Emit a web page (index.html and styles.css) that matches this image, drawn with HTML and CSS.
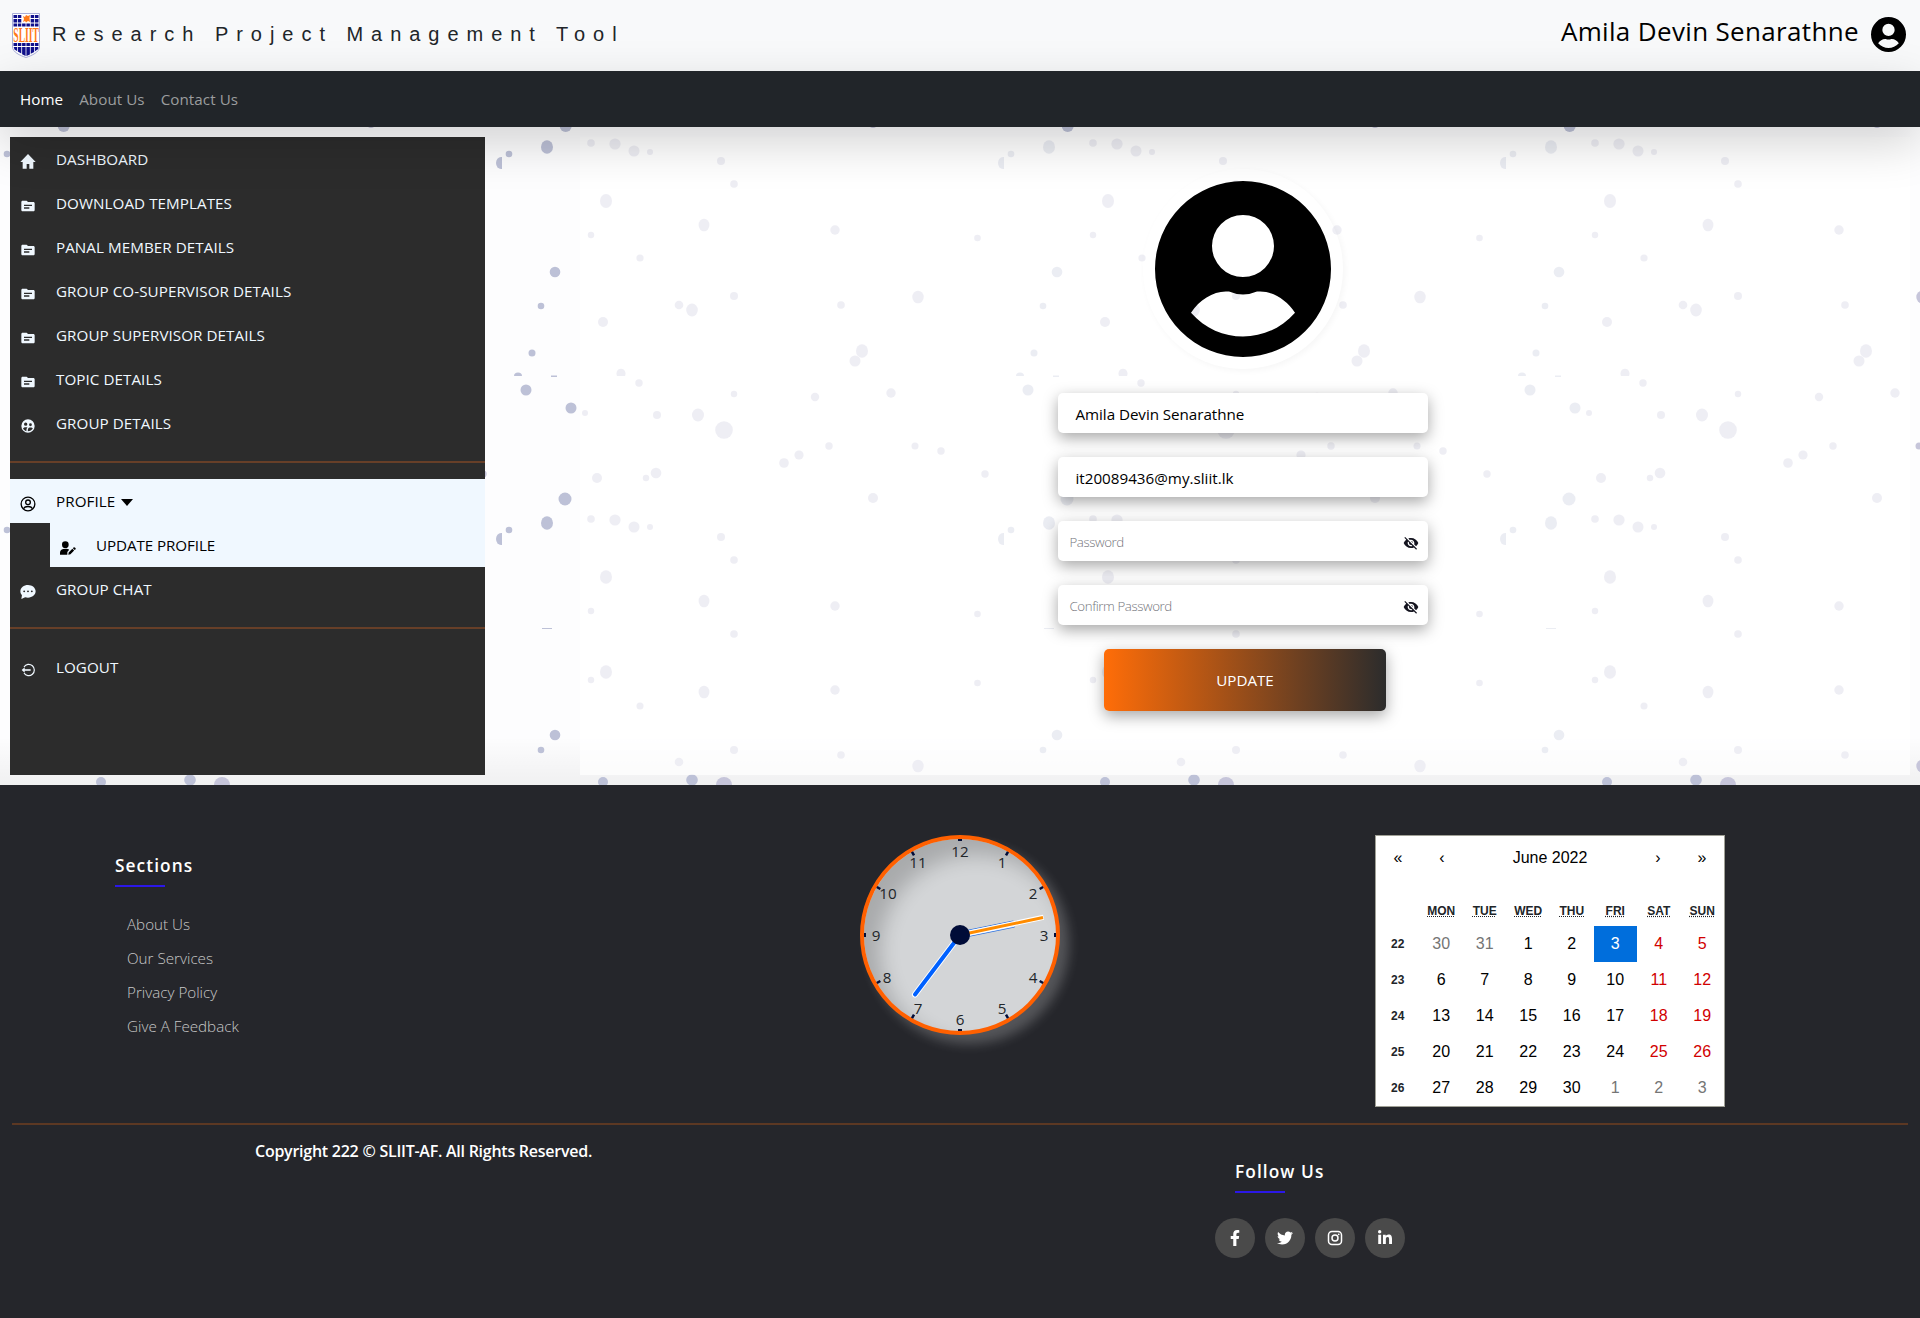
FILE: index.html
```html
<!DOCTYPE html>
<html lang="en">
<head>
<meta charset="utf-8">
<title>Research Project Management Tool</title>
<link rel="stylesheet" href="styles.css">
</head>
<body>
<svg class="defs" width="0" height="0" aria-hidden="true">
  <symbol id="avatar" viewBox="-88 -88 176 176"><path fill-rule="evenodd" d="M0-88A88 88 0 1 1 0 88A88 88 0 1 1 0-88ZM0-54A31 31 0 1 0 0 8A31 31 0 1 0 0-54ZM-52 43.7C-43 30-28 21-14 22.6Q0 28.6 14 22.6C28 21 43 30 52 43.7C24 75.5-24 75.5-52 43.7Z"/></symbol>
  <symbol id="folder" viewBox="0 0 24 24"><path d="M20 6h-8l-2-2H4c-1.1 0-2 .9-2 2v12c0 1.100.9 2 2 2h16c1.100 0 2-.9 2-2V8c0-1.100-.9-2-2-2zm-6 10H6v-2h8v2zm4-4H6v-2h12v2z"/></symbol>
  <symbol id="eye-off" viewBox="0 0 24 24"><path d="M12 7c2.760 0 5 2.240 5 5 0 .65-.13 1.260-.36 1.830l2.920 2.920c1.510-1.260 2.700-2.890 3.430-4.750-1.730-4.390-6-7.500-11-7.500-1.400 0-2.740.25-3.980.7l2.160 2.160C10.740 7.130 11.350 7 12 7zM2 4.270l2.280 2.280.46.46C3.080 8.300 1.780 10.020 1 12c1.730 4.390 6 7.500 11 7.500 1.550 0 3.030-.3 4.380-.84l.42.42L19.730 22 21 20.730 3.270 3 2 4.270zM7.530 9.800l1.550 1.550c-.05.21-.08.43-.08.65 0 1.660 1.340 3 3 3 .22 0 .44-.03.65-.08l1.550 1.550c-.67.33-1.410.53-2.200.53-2.760 0-5-2.240-5-5 0-.79.2-1.530.53-2.200zm4.310-.78l3.150 3.150.02-.16c0-1.660-1.340-3-3-3l-.17.01z"/></symbol>
</svg>

<header class="header">
  <div class="brand">
    <svg class="logo" width="28" height="45" viewBox="0 0 28 45">
      <path d="M.5.5h27V34C27.500 39 20 42.500 14 44.500C8 42.500.5 39 .5 34Z" fill="#fff" stroke="#a9aed8"/>
      <g fill="#10108c">
        <path d="M1.500 2h3.500v3h-3.500zM5.800 2h3.500v3h-3.500zM18.700 2h3.500v3h-3.500zM23 2h3.500v3h-3.500zM1.500 6h3.500v3.500h-3.500zM5.800 6h3.500v3.500h-3.500zM18.700 6h3.500v3.500h-3.500zM23 6h3.500v3.500h-3.500zM1.500 10.500h3.500v3h-3.500zM5.800 10.500h3.500v3h-3.500zM10.100 10.500h3.500v3h-3.500zM14.400 10.500h3.500v3h-3.500zM18.700 10.500h3.500v3h-3.500zM23 10.500h3.500v3h-3.500z"/>
        <path d="M1.500 30h3.500v3h-3.500zM5.800 30h3.500v3h-3.500zM10.100 30h3.500v3h-3.500zM14.400 30h3.500v3h-3.500zM18.700 30h3.500v3h-3.500zM23 30h3.500v3h-3.500zM1.700 34h3.300v4L2.500 36.500zM5.800 34h3.500v6.500l-3.500-2zM10.100 34h3.500v9l-3.500-1.700zM14.400 34h3.500v7.500l-3.500 1.500zM18.700 34h3.500v5L18.700 40.700zM23 34h3.300v2l-3.300 2.300z"/>
      </g>
      <path d="M11 3l2 1 1-2 2 1 2-1-.5 3 .5 4-2-1-2 1.500-1-1.500-2 1 1-3z" fill="#ff7a1a"/>
      <text transform="translate(1.300 28.700) scale(.47 1)" class="logo-text">SLIIT</text>
    </svg>
    <span class="brand-name">Research Project Management Tool</span>
  </div>
  <div class="user"><span class="user-name">Amila Devin Senarathne</span><svg width="35" height="35"><use href="#avatar"/></svg></div>
</header>

<nav class="navbar">
  <a class="nav-home">Home</a><a class="nav-about">About Us</a><a class="nav-contact">Contact Us</a>
</nav>

<main class="main">
  <svg class="dots" width="1920" height="658" viewBox="0 127 1920 658" aria-hidden="true">
    <defs>
      <pattern id="drops" x="502" y="0" width="502" height="1000" patternUnits="userSpaceOnUse">
        <g transform="translate(-502 0)">
          <g fill="#bdc1d7">
            <circle cx="565.700" cy="126" r="6"/><ellipse cx="547" cy="147" rx="6" ry="6.800"/><circle cx="509" cy="154" r="3.300"/><ellipse cx="1003" cy="163" rx="5" ry="6"/>
            <circle cx="555" cy="272" r="5.300"/><circle cx="541" cy="306" r="3.300"/><circle cx="532" cy="353" r="3.500"/><path d="M514 376a4 3.500 0 0 1 8 0z"/>
            <circle cx="526" cy="390" r="5.500"/><circle cx="571" cy="408" r="5.500"/><circle cx="565" cy="499" r="6.500"/><ellipse cx="547" cy="523" rx="6" ry="6.800"/>
            <circle cx="509" cy="530" r="3.300"/><ellipse cx="1003" cy="539" rx="5" ry="6"/><circle cx="555" cy="735" r="5.300"/><circle cx="541" cy="750" r="3.300"/>
            <circle cx="603" cy="782" r="5"/><circle cx="692" cy="780" r="5.800"/><path d="M551 375.500h6v1.500h-6zM542 628h10v1h-10z"/>
          </g>
          <g fill="#c6c5da">
            <circle cx="591" cy="143" r="3.800"/><circle cx="615" cy="144" r="5.600"/><circle cx="634" cy="151" r="5.500"/><circle cx="650" cy="152" r="3"/><circle cx="721" cy="161" r="4"/><circle cx="734" cy="184" r="3.800"/>
            <ellipse cx="606" cy="201" rx="6" ry="7"/><circle cx="591" cy="235" r="3.200"/><circle cx="640" cy="258" r="3.600"/><ellipse cx="704" cy="225" rx="5.400" ry="6.300"/><circle cx="835" cy="230" r="4.700"/><circle cx="977.500" cy="238" r="3.300"/>
            <circle cx="603" cy="322" r="5"/><circle cx="679" cy="305" r="4.300"/><ellipse cx="692" cy="310" rx="5.800" ry="6.500"/><circle cx="734" cy="296" r="4"/><circle cx="841" cy="305" r="3.800"/><ellipse cx="918" cy="297" rx="5.700" ry="6.300"/>
            <path d="M617 376a4.500 5 0 1 1 8 0z"/><circle cx="639" cy="383" r="3.700"/><ellipse cx="862" cy="351" rx="6" ry="6.800"/><circle cx="855" cy="361" r="5.500"/><circle cx="585" cy="413" r="3"/><circle cx="657" cy="415" r="4"/><ellipse cx="698" cy="415" rx="6" ry="6.500"/>
            <circle cx="724" cy="430" r="8.800"/><circle cx="734" cy="394" r="3.200"/><circle cx="815" cy="397" r="4.200"/><circle cx="891" cy="393" r="4.700"/><circle cx="799" cy="455" r="4.600"/><circle cx="829" cy="446" r="3.700"/><circle cx="915" cy="446" r="3.500"/><circle cx="941" cy="451" r="3.700"/><circle cx="784" cy="463" r="4.800"/><circle cx="873" cy="124" r="4"/>
            <circle cx="985" cy="474" r="3.700"/><circle cx="597" cy="478" r="5"/><circle cx="646" cy="478" r="3.200"/><circle cx="656" cy="473" r="5.300"/><circle cx="591" cy="519" r="3.800"/><circle cx="615" cy="520" r="5.600"/><circle cx="634" cy="527" r="5.500"/><circle cx="650" cy="527" r="3"/><circle cx="721" cy="537" r="4"/><circle cx="734" cy="560" r="3.800"/><circle cx="873" cy="498" r="5"/>
            <ellipse cx="606" cy="577" rx="6" ry="6.800"/><circle cx="591" cy="611" r="3.200"/><ellipse cx="704" cy="601" rx="5.400" ry="6.300"/><circle cx="835" cy="606" r="4.700"/><circle cx="977.500" cy="614" r="3.300"/><circle cx="734" cy="634" r="3.800"/>
            <ellipse cx="606" cy="672" rx="6" ry="6.800"/><circle cx="591" cy="680" r="3.200"/><circle cx="640" cy="706" r="3.500"/><ellipse cx="704" cy="692" rx="5.400" ry="6.300"/><circle cx="835" cy="690" r="4.700"/><circle cx="977.500" cy="683" r="3.300"/>
            <circle cx="679" cy="762" r="4.300"/><circle cx="734" cy="750" r="4"/><circle cx="841" cy="755" r="3.800"/><ellipse cx="918" cy="766" rx="5.700" ry="6.300"/><circle cx="724" cy="785" r="8"/>
          </g>
        </g>
      </pattern>
    </defs>
    <rect y="127" width="1920" height="658" fill="url(#drops)"/>
  </svg>

  <aside class="sidebar">
    <a class="item"><svg class="icon" viewBox="0 0 24 24"><path d="M10 22v-7h4v7h6V12h3.500L12 0 .5 12H4v10z"/></svg><span>DASHBOARD</span></a>
    <a class="item"><svg class="icon"><use href="#folder"/></svg><span>DOWNLOAD TEMPLATES</span></a>
    <a class="item"><svg class="icon"><use href="#folder"/></svg><span>PANAL MEMBER DETAILS</span></a>
    <a class="item"><svg class="icon"><use href="#folder"/></svg><span>GROUP CO-SUPERVISOR DETAILS</span></a>
    <a class="item"><svg class="icon"><use href="#folder"/></svg><span>GROUP SUPERVISOR DETAILS</span></a>
    <a class="item"><svg class="icon"><use href="#folder"/></svg><span>TOPIC DETAILS</span></a>
    <a class="item"><svg class="icon" viewBox="0 0 24 24"><path fill-rule="evenodd" d="M12 2a10 10 0 1 0 0 20 10 10 0 0 0 0-20zM8.500 6.800a2.500 2.500 0 1 1 0 5 2.500 2.500 0 0 1 0-5zM15.700 8a2.100 2.100 0 1 1 0 4.200 2.100 2.100 0 0 1 0-4.200zM4.500 15.500c1-1.700 4.500-2.300 6.800-1.300-1.300 1-1.700 2.300-1.700 5.500-2.300-.5-4.300-2.200-5.100-4.200zm7.300 4.400c0-3 0-5.500 3.900-5.500 1.800 0 3 .5 3.500 1.500-1.400 2.500-4.200 4-7.400 4z"/></svg><span>GROUP DETAILS</span></a>
    <hr>
    <a class="item active"><svg class="icon" viewBox="0 0 24 24" fill="none" stroke="#000" stroke-width="2"><circle cx="12" cy="12" r="10.300"/><circle cx="12" cy="9.500" r="3.500"/><path d="M5.500 19.500c1-5 12-5 13 0"/></svg><span>PROFILE</span><i class="caret"></i></a>
    <a class="item active sub"><svg class="icon wide" viewBox="0 0 24 20"><circle cx="8" cy="5" r="5"/><path d="M0 20v-3c0-4 3-6 8-6 2.500 0 4.500.5 5.800 1.600L11 16v4zM12.500 20l.5-3.200 5.500-5.600 2.700 2.700-5.500 5.600zM19.300 10.400l1.400-1.400c1-1 3.700 1.600 2.700 2.700L22 13z"/></svg><span>UPDATE PROFILE</span></a>
    <a class="item"><svg class="icon wide" viewBox="0 0 24 22"><path fill-rule="evenodd" d="M12 0C5.500 0 0 4.300 0 10c0 2.500 1 4.500 2.500 6.300L1.500 22l6-2.700c1.500.5 3 .7 4.500.7 6.600 0 12-4.500 12-10S18.600 0 12 0zM6 8.500a1.500 1.500 0 1 1 0 3 1.500 1.500 0 0 1 0-3zm6 0a1.500 1.500 0 1 1 0 3 1.500 1.500 0 0 1 0-3zm6 0a1.500 1.500 0 1 1 0 3 1.500 1.500 0 0 1 0-3z"/></svg><span>GROUP CHAT</span></a>
    <hr>
    <a class="item"><svg class="icon" viewBox="0 0 24 24" fill="none" stroke="#f0f8ff" stroke-width="1.800"><path d="M6 7.500a8.400 8.400 0 1 1 0 9"/><path d="M16 12H5" stroke-width="2.400"/><path d="M7 7.800v8.400L2.500 12z" fill="#f0f8ff" stroke="none"/></svg><span>LOGOUT</span></a>
  </aside>

  <section class="panel">
    <form class="form">
      <div class="photo"><svg width="176" height="176"><use href="#avatar"/></svg></div>
      <div class="field"><span class="value name">Amila Devin Senarathne</span></div>
      <div class="field"><span class="value mail">it20089436@my.sliit.lk</span></div>
      <div class="field pass"><span>Password</span><svg width="16" height="16"><use href="#eye-off"/></svg></div>
      <div class="field pass"><span>Confirm Password</span><svg width="16" height="16"><use href="#eye-off"/></svg></div>
      <div class="update">UPDATE</div>
    </form>
  </section>
</main>

<footer class="footer">
  <div class="top">
    <div class="sections">
      <h4>Sections</h4>
      <ul><li>About Us</li><li>Our Services</li><li>Privacy Policy</li><li>Give A Feedback</li></ul>
    </div>
    <div class="clock">
      <svg width="200" height="200" viewBox="0 0 200 200">
        <g stroke="#000c38" stroke-width="4">
          <path d="M100 4v2M100 194v2M4 100h2M194 100h2"/>
          <path d="M100 4v4M100 192v4M4 100h4M192 100h4" stroke-width="2.500" transform="rotate(30 100 100)"/>
          <path d="M100 4v4M100 192v4M4 100h4M192 100h4" stroke-width="2.500" transform="rotate(60 100 100)"/>
        </g>
        <g class="digits"><text x="100" y="22">12</text><text x="142" y="33">1</text><text x="173" y="64">2</text><text x="184" y="106">3</text><text x="173" y="148">4</text><text x="142" y="179">5</text><text x="100" y="190">6</text><text x="58" y="179">7</text><text x="27" y="148">8</text><text x="16" y="106">9</text><text x="28" y="64">10</text><text x="58" y="33">11</text></g>
        <g stroke-linecap="round">
          <path d="M100 100L154 89" stroke="#2f74e0" stroke-width="7" stroke-linecap="butt"/><path d="M100 100L154 89" stroke="#eef2fa" stroke-width="5.500" stroke-linecap="butt"/>
          <path d="M100 100L55 159.500" stroke="#fff" stroke-width="6"/><path d="M100 100L55 159.500" stroke="#0061ff" stroke-width="4"/>
          <path d="M100 100L183.500 82.300" stroke="#fff" stroke-width="5" stroke-linecap="butt"/><path d="M100 100L183 82.500" stroke="#ff8c00" stroke-width="3" stroke-linecap="butt"/>
        </g>
        <circle cx="100" cy="100" r="10" fill="#000c38"/>
      </svg>
    </div>
    <div class="calendar">
      <div class="cal-nav"><b>«</b><b>‹</b><span>June 2022</span><b>›</b><b>»</b></div>
      <div class="grid head"><i></i><abbr>MON</abbr><abbr>TUE</abbr><abbr>WED</abbr><abbr>THU</abbr><abbr>FRI</abbr><abbr>SAT</abbr><abbr>SUN</abbr></div>
      <div class="grid">
        <b>22</b><span class="out">30</span><span class="out">31</span><span>1</span><span>2</span><span class="today">3</span><span class="we">4</span><span class="we">5</span>
        <b>23</b><span>6</span><span>7</span><span>8</span><span>9</span><span>10</span><span class="we">11</span><span class="we">12</span>
        <b>24</b><span>13</span><span>14</span><span>15</span><span>16</span><span>17</span><span class="we">18</span><span class="we">19</span>
        <b>25</b><span>20</span><span>21</span><span>22</span><span>23</span><span>24</span><span class="we">25</span><span class="we">26</span>
        <b>26</b><span>27</span><span>28</span><span>29</span><span>30</span><span class="out">1</span><span class="out">2</span><span class="out">3</span>
      </div>
    </div>
  </div>
  <hr>
  <div class="bottom">
    <p class="copyright">Copyright 222 © SLIIT-AF. All Rights Reserved.</p>
    <div class="follow">
      <h4>Follow Us</h4>
      <div class="social">
        <a><svg width="10" height="16" viewBox="0 0 320 512"><path d="M279.140 288l14.220-92.660h-88.910v-60.130c0-25.350 12.420-50.060 52.240-50.060h40.420V6.260S260.430 0 225.360 0c-73.220 0-121.080 44.380-121.080 124.720v70.620H22.890V288h81.390v224h100.170V288z"/></svg></a>
        <a><svg width="16" height="16" viewBox="0 0 512 512"><path d="M459.370 151.716c.325 4.548.325 9.097.325 13.645 0 138.720-105.583 298.558-298.558 298.558-59.452 0-114.680-17.219-161.137-47.106 8.447.974 16.568 1.299 25.340 1.299 49.055 0 94.213-16.568 130.274-44.832-46.132-.975-84.792-31.188-98.112-72.772 6.498.974 12.995 1.624 19.818 1.624 9.421 0 18.843-1.300 27.614-3.573-48.081-9.747-84.143-51.980-84.143-102.985v-1.299c13.969 7.797 30.214 12.670 47.431 13.319-28.264-18.843-46.781-51.005-46.781-87.391 0-19.492 5.197-37.360 14.294-52.954 51.655 63.675 129.300 105.258 216.365 109.807-1.624-7.797-2.599-15.918-2.599-24.040 0-57.828 46.782-104.934 104.934-104.934 30.213 0 57.502 12.670 76.670 33.137 23.715-4.548 46.456-13.320 66.599-25.340-7.798 24.366-24.366 44.833-46.132 57.827 21.117-2.273 41.584-8.122 60.426-16.243-14.292 20.791-32.161 39.308-52.628 54.253z"/></svg></a>
        <a><svg width="16" height="16" viewBox="0 0 16 16" fill="none"><rect x="1.500" y="1.500" width="13" height="13" rx="3.500" stroke="#fff" stroke-width="1.500"/><circle cx="8" cy="8" r="3" stroke="#fff" stroke-width="1.500"/><circle cx="11.700" cy="4.300" r=".9" fill="#fff"/></svg></a>
        <a><svg width="16" height="16" viewBox="0 0 448 512"><path d="M100.280 448H7.400V148.900h92.880zM53.790 108.100C24.090 108.100 0 83.500 0 53.800a53.790 53.790 0 0 1 107.580 0c0 29.700-24.100 54.300-53.790 54.300zM447.900 448h-92.680V302.400c0-34.700-.7-79.200-48.290-79.200-48.290 0-55.690 37.700-55.690 76.700V448h-92.780V148.900h89.080v40.800h1.300c12.400-23.500 42.690-48.300 87.880-48.300 94 0 111.280 61.900 111.280 142.300V448z"/></svg></a>
      </div>
    </div>
  </div>
</footer>
</body>
</html>
```
FILE: styles.css
```css
* { box-sizing: border-box; }
body { margin: 0; width: 1920px; height: 1318px; overflow: hidden; background: #fdfdfe; font-family: "Open Sans", "Noto Sans", sans-serif; font-size: 15.2px; color: #212529; }
.defs { position: absolute; }
svg { display: block; flex: none; }

.header { height: 71px; display: flex; justify-content: space-between; padding: 0 14px 0 12px; background: #f8f9fa; }
.brand { display: flex; gap: 12px; padding-top: 13px; }
.logo-text { font: bold 20.500px "Liberation Serif", serif; fill: #ff7a1a; }
.brand-name { font: 20px/23px "Liberation Sans", Arial, sans-serif; letter-spacing: 7.970px; margin-top: 10px; white-space: nowrap; }
.user { display: flex; gap: 12px; padding-top: 17px; color: #000; }
.user-name { font-size: 26px; line-height: 36px; margin-top: -4px; white-space: nowrap; letter-spacing: .34px; }

.navbar { position: relative; z-index: 2; height: 56px; display: flex; align-items: center; gap: 16px; padding-left: 20px; background: #212529; color: #9b9d9e; letter-spacing: .06px; box-shadow: 0 16px 48px rgba(0,0,0,.175); }
.nav-home { color: #fff; }

.main { position: relative; z-index: 1; height: 658px; display: flex; gap: 95px; padding: 10px; background: linear-gradient(rgba(0,0,0,0) 610px, rgba(0,0,0,.05)), #fdfdfe; }
.dots { position: absolute; inset: 0; }
.sidebar { position: relative; width: 475px; background: #2c2c2c; color: #f0f8ff; }
.item { height: 44px; display: flex; align-items: center; padding-left: 9px; }
.item span { margin: 0 0 0 19px; white-space: nowrap; letter-spacing: .06px; }
.icon { width: 16px; height: 16px; margin: 5px 1px 0; fill: #f0f8ff; }
.icon.wide { height: 14px; }
.sidebar hr { height: 2px; border: 0; margin: 16px 0; background: #673f28; }
.active { background: #f0f8ff; color: #000; }
.active .icon { fill: #000; }
.active .icon[fill="none"], .icon[fill="none"] { fill: none; }
.sub { margin-left: 40px; }
.sub span { letter-spacing: -.08px; }
.caret { margin: 3px 0 0 6px; border: 6px solid transparent; border-top: 7px solid #000; border-bottom: 0; }

.panel { position: relative; flex: 1; background: rgba(255,255,255,.7); display: flex; justify-content: center; }
.form { width: 370px; display: flex; flex-direction: column; align-items: center; gap: 24px; padding-top: 32px; margin-right: 4px; }
.photo { width: 200px; height: 200px; border-radius: 50%; display: flex; align-items: center; justify-content: center; box-shadow: 2px 2px 6px rgba(0,0,0,.04); }
.field { width: 370px; height: 40px; border-radius: 5px; background: #fff; color: #000; box-shadow: 0 5px 15px rgba(0,0,0,.35); display: flex; align-items: center; padding: 1px 9px 0 17.500px; }
.name { letter-spacing: -.05px; }
.pass { justify-content: space-between; padding-left: 11.500px; color: #74757b; font-size: 13.300px; font-weight: 300; letter-spacing: -.42px; }
.pass svg { fill: #14141f; margin-top: 3px; }
.update { width: 282px; height: 62px; margin-left: 4px; border-radius: 5px; background: linear-gradient(90deg, #ff6d08, #2c2c2c); color: #fff; box-shadow: 0 5px 15px rgba(0,0,0,.35); display: flex; align-items: center; justify-content: center; }

.footer { position: relative; z-index: 3; height: 533px; background: #25262b; color: #fff; padding: 50px 12px 0; }
.top { display: flex; height: 272px; }
.sections { width: 848px; padding: 18px 0 0 103px; }
h4 { margin: 0; font-size: 17.300px; line-height: 26px; font-weight: 600; letter-spacing: 1.080px; padding-bottom: 6px; }
h4::after { content: ""; display: block; width: 50px; height: 2px; background: #2b17e8; transform: translateY(6px); }
ul { list-style: none; margin: 20px 0 0; padding: 0 0 0 12px; font-weight: 300; line-height: 34px; color: #c8c8c8; }
.clock { width: 200px; height: 200px; border-radius: 50%; border: 4px solid #ff6000; background: #d3d5d7; box-shadow: inset 16px 16px 20px rgba(0,0,0,.2), 9px 9px 12px rgba(255,255,255,.22); margin-right: 315px; }
.clock svg { margin: -4px; }
.digits { font-size: 15.2px; fill: #212529; text-anchor: middle; }
.calendar { width: 350px; border: 1px solid #a0a096; background: #fff; color: #000; font-family: "Liberation Sans", Arial, sans-serif; font-size: 16px; }
.cal-nav { display: flex; height: 44px; line-height: 44px; margin-bottom: 16px; text-align: center; }
.cal-nav b { width: 44px; font-weight: 400; }
.cal-nav span { flex: 1; }
.grid { display: grid; grid-template-columns: repeat(8, 43.5px); grid-auto-rows: 36px; line-height: 36px; text-align: center; }
.head { grid-auto-rows: 30px; line-height: 30px; font-size: 12px; font-weight: 700; color: #212529; }
.head abbr { text-decoration: underline dotted; }
.grid b { font-size: 12px; color: #212529; }
.out { color: #757575; }
.we { color: #d10000; }
.today { background: #006edc; color: #fff; }
.footer hr { height: 2px; border: 0; margin: 16px 0 0; background: #5c3823; }
.bottom { display: flex; }
.copyright { margin: 14px 0 0 243px; width: 960px; font-size: 16px; font-weight: 600; line-height: 24px; white-space: nowrap; letter-spacing: -.25px; }
.follow { padding-top: 34px; }
.follow h4 { margin-left: 20px; }
.social { display: flex; gap: 10px; margin-top: 25px; }
.social a { width: 40px; height: 40px; border-radius: 50%; background: #4a4a4a; display: flex; align-items: center; justify-content: center; }
.social svg { fill: #fff; }
.social svg[fill="none"] { fill: none; }
```
